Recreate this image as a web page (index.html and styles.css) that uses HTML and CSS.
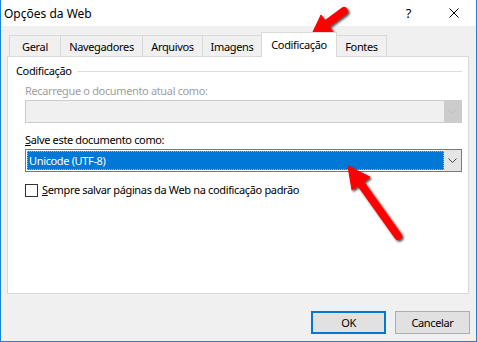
FILE: index.html
```html
<!DOCTYPE html>
<html lang="pt">

<head>
    <meta charset="UTF-8">
    <title>Opções da Web</title>
    <link rel="stylesheet" href="styles.css">
</head>

<body>
    <div class="window">
        <div class="titlebar">
            <span class="title">Opções da Web</span>
            <span class="caption-btn">?</span>
            <span class="caption-btn">
                <svg width="10" height="10" viewBox="0 0 10 10">
                    <path d="M0.5 0.5 L9.5 9.5 M9.5 0.5 L0.5 9.5" stroke="#000" stroke-width="1" fill="none" />
                </svg>
            </span>
        </div>

        <div class="dialog">
            <div class="tabs">
                <div class="tab tab-geral">Geral</div>
                <div class="tab tab-nav">Navegadores</div>
                <div class="tab tab-arq">Arquivos</div>
                <div class="tab tab-img">Imagens</div>
                <div class="tab tab-cod active">Codificação</div>
                <div class="tab tab-fon">Fontes</div>
            </div>

            <div class="panel">
                <div class="group-head">
                    <span>Codificação</span>
                    <span class="rule"></span>
                </div>

                <div class="fields">
                    <div class="field disabled">
                        <div class="field-label">Recarregue o documento atual como:</div>
                        <div class="combo">
                            <div class="combo-value"></div>
                            <div class="combo-btn">
                                <svg width="9" height="5" viewBox="0 0 9 5">
                                    <path d="M0.5 0.5 L4.5 4.5 L8.5 0.5" fill="none" stroke="#bfbfbf" stroke-width="1" />
                                </svg>
                            </div>
                        </div>
                    </div>

                    <div class="field second">
                        <div class="field-label"><u>S</u>alve este documento como:</div>
                        <div class="combo">
                            <div class="combo-value">
                                <span class="selected">Unicode (UTF-8)</span>
                            </div>
                            <div class="combo-btn">
                                <svg width="9" height="5" viewBox="0 0 9 5">
                                    <path d="M0.5 0.5 L4.5 4.5 L8.5 0.5" fill="none" stroke="#444" stroke-width="1" />
                                </svg>
                            </div>
                        </div>
                    </div>

                    <label class="check-row">
                        <span class="check-box"></span>
                        <span><u>S</u>empre salvar páginas da Web na codificação padrão</span>
                    </label>
                </div>
            </div>

            <div class="buttons">
                <button class="btn default">OK</button>
                <button class="btn">Cancelar</button>
            </div>
        </div>

        <!-- setas vermelhas da anotação -->
        <svg class="annot" width="477" height="342" viewBox="0 0 477 342">
            <defs>
                <filter id="shadow" x="-20%" y="-20%" width="140%" height="140%">
                    <feDropShadow dx="1.5" dy="1.5" stdDeviation="1.2" flood-color="#000" flood-opacity="0.75" />
                </filter>
            </defs>
            <g filter="url(#shadow)" fill="#f00" stroke="#f00">
                <line x1="344" y1="11" x2="327" y2="23.5" stroke-width="8" stroke-linecap="round" />
                <polygon points="312,34 333,32 321,15" stroke-width="1" stroke-linejoin="round" />
                <line x1="398" y1="236" x2="361" y2="184" stroke-width="8" stroke-linecap="round" />
                <polygon points="348,166 370,177 352,190" stroke-width="1" stroke-linejoin="round" />
            </g>
        </svg>
    </div>
</body>

</html>
```

FILE: styles.css
```css
html,
body {
    margin: 0;
    padding: 0;
}

body {
    font-family: "Noto Sans", sans-serif;
    font-size: 11px;
    letter-spacing: -0.35px;
    color: #000;
}

.window {
    position: relative;
    width: 477px;
    height: 342px;
    box-sizing: border-box;
    border: 1px solid #1883d7;
    border-top: none;
    background: #f0f0f0;
    display: flex;
    flex-direction: column;
}

.titlebar {
    height: 26px;
    background: #fff;
    display: flex;
    align-items: center;
    padding-left: 3px;
}

.title {
    flex: 1;
    font-size: 12px;
    letter-spacing: 0;
}

.caption-btn {
    width: 45px;
    display: flex;
    justify-content: center;
    align-items: center;
    font-size: 13px;
}

.dialog {
    flex: 1;
    padding: 6px 7px 0 6px;
    display: flex;
    flex-direction: column;
}

/* onglets */
.tabs {
    display: flex;
    align-items: flex-end;
    height: 24px;
    padding-left: 2px;
}

.tab {
    box-sizing: border-box;
    height: 21px;
    border: 1px solid #d9d9d9;
    border-bottom: none;
    margin-left: -1px;
    display: flex;
    justify-content: center;
    align-items: center;
    padding-top: 1px;
    background: #f0f0f0;
}

.tab:first-child {
    margin-left: 0;
}

.tab.active {
    position: relative;
    z-index: 1;
    height: 25px;
    margin-bottom: -1px;
    background: #fff;
    padding-top: 0;
    padding-bottom: 2px;
}

.tab-geral { width: 52px; }
.tab-nav { width: 83px; }
.tab-arq { width: 61px; }
.tab-img { width: 60px; }
.tab-cod { width: 76px; }
.tab-fon { width: 51px; }

.panel {
    box-sizing: border-box;
    height: 238px;
    background: #fff;
    border: 1px solid #d9d9d9;
}

.group-head {
    display: flex;
    align-items: center;
    margin: 6px 6px 0 8px;
    line-height: 16px;
}

.group-head .rule {
    flex: 1;
    height: 1px;
    background: #dcdcdc;
    margin-left: 5px;
}

.fields {
    padding: 0 6px 0 17px;
}

.field {
    margin-top: 4px;
}

.field.second {
    margin-top: 9px;
}

.field-label {
    line-height: 16px;
    margin-bottom: 1px;
}

.field.disabled .field-label {
    color: #a0a0a0;
}

.combo {
    box-sizing: border-box;
    height: 23px;
    border: 1px solid #7a7a7a;
    display: flex;
    background: #fff;
}

.field.disabled .combo {
    border-color: #cccccc;
    background: #f0f0f0;
}

.combo-value {
    flex: 1;
    padding: 1px 0 1px 1px;
    display: flex;
}

.selected {
    flex: 1;
    box-sizing: border-box;
    background: #0078d7;
    color: #fff;
    border: 1px dotted #f4a440;
    line-height: 17px;
    padding-left: 1px;
}

.combo-btn {
    width: 17px;
    display: flex;
    justify-content: center;
    align-items: center;
    background: #e5e5e5;
}

.field.disabled .combo-btn {
    background: #cccccc;
}

.check-row {
    display: flex;
    align-items: center;
    margin-top: 10px;
    line-height: 16px;
}

.check-box {
    box-sizing: border-box;
    width: 13px;
    height: 13px;
    border: 1px solid #333;
    background: #fff;
    margin-right: 4px;
}

/* boutons du bas */
.buttons {
    display: flex;
    justify-content: flex-end;
    gap: 9px;
    margin-top: 17px;
    margin-right: -1px;
}

.btn {
    box-sizing: border-box;
    width: 75px;
    height: 23px;
    margin: 0;
    padding: 0;
    border: 1px solid #adadad;
    background: #e1e1e1;
    font-family: inherit;
    font-size: 11px;
    letter-spacing: inherit;
    color: #000;
}

.btn.default {
    border: 2px solid #0078d7;
}

.annot {
    position: absolute;
    left: -1px;
    top: 0;
    pointer-events: none;
}
```
